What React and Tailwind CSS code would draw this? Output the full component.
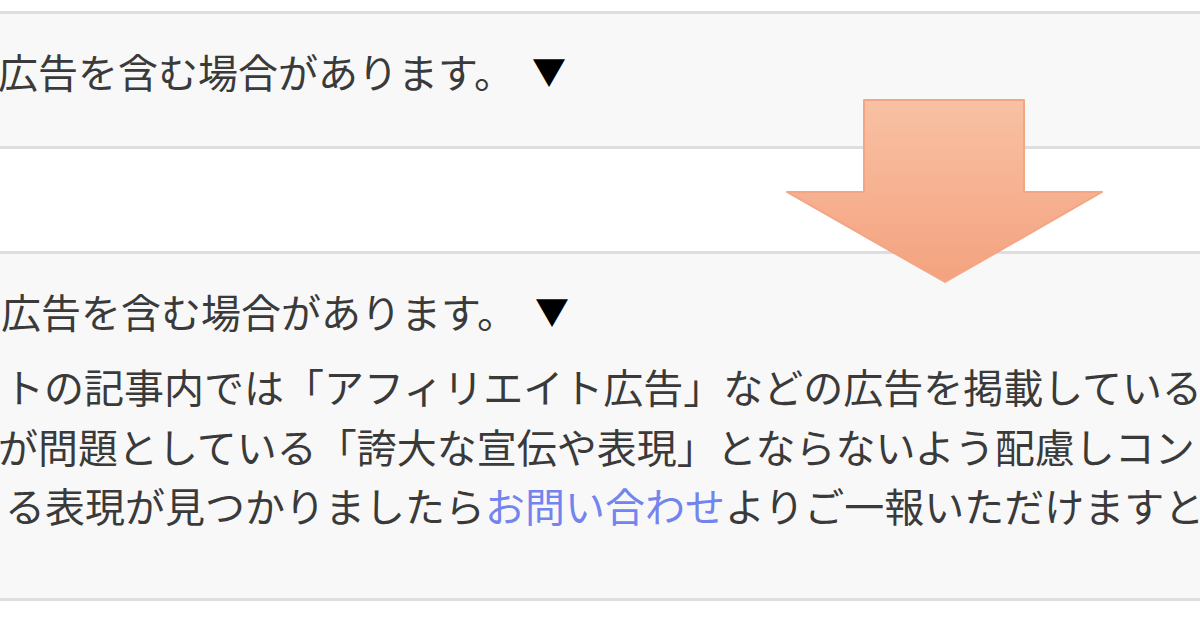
const lines = [
  { text: 'トの記事内では「アフィリエイト広告」などの広告を掲載している', offset: 'ml-[4px]' },
  { text: 'が問題としている「誇大な宣伝や表現」とならないよう配慮しコン', offset: 'ml-[-2px]' },
];

function Header({ offset }) {
  return (
    <div className={`flex items-center whitespace-nowrap h-[60px] ${offset}`}>
      <span>広告を含む場合があります。</span>
      <span className="ml-[18px] text-[34px] text-black">▼</span>
    </div>
  );
}

export default function App() {
  return (
    <div
      className="relative w-[1200px] h-[627px] overflow-hidden bg-white text-[40px] leading-[60px] text-[#3a3a3a]"
      style={{ fontFamily: '"Noto Sans CJK JP", "Noto Sans", sans-serif' }}
    >
      <div className="pt-[11px]">
        {/* collapsed state */}
        <div className="border-y-[3px] border-[#dedede] bg-[#f8f8f8] pt-[27px] pb-[45px]">
          <Header offset="ml-[-2px]" />
        </div>

        <div className="h-[102px] bg-white" />

        {/* expanded state */}
        <div className="border-y-[3px] border-[#dedede] bg-[#f8f8f8] pt-[27px] pb-[62px]">
          <Header offset="ml-[1px]" />
          <div className="mt-4 leading-[59.5px]">
            {lines.map((line, i) => (
              <div key={i} className={`whitespace-nowrap ${line.offset}`}>
                {line.text}
              </div>
            ))}
            <div className="whitespace-nowrap ml-[5px]">
              る表現が見つかりましたら
              <span className="text-[#7384ee]">お問い合わせ</span>
              よりご一報いただけますと
            </div>
          </div>
        </div>
      </div>

      {/* arrow overlay */}
      <svg className="absolute left-0 top-0" width="1200" height="627" viewBox="0 0 1200 627">
        <defs>
          <linearGradient id="arrowFill" x1="0" y1="100" x2="0" y2="282" gradientUnits="userSpaceOnUse">
            <stop offset="0" stopColor="#f8c1a3" />
            <stop offset="1" stopColor="#f4a27f" />
          </linearGradient>
        </defs>
        <polygon
          points="864,100 1024,100 1024,192 1102,192 945,282 787,192 864,192"
          fill="url(#arrowFill)"
          stroke="#f3a584"
          strokeWidth="2"
          strokeLinejoin="round"
        />
      </svg>
    </div>
  );
}
